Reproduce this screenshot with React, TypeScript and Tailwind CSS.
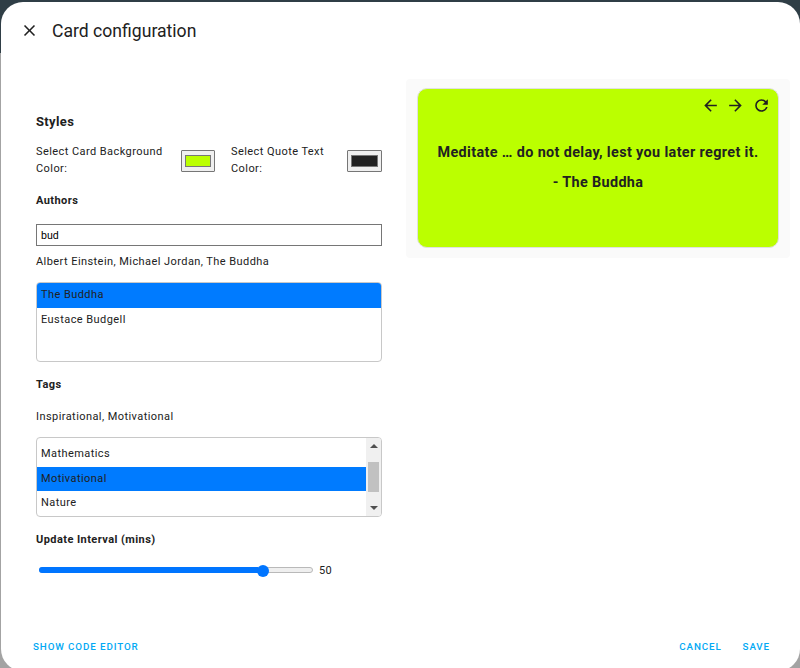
import React from "react";

const mdi = {
  close: "M19,6.41L17.59,5L12,10.59L6.41,5L5,6.41L10.59,12L5,17.59L6.41,19L12,13.41L17.59,19L19,17.59L13.41,12L19,6.41Z",
  left: "M20,11V13H8L13.5,18.5L12.08,19.92L4.16,12L12.08,4.08L13.5,5.5L8,11H20Z",
  right: "M4,11V13H16L10.5,18.5L11.92,19.92L19.84,12L11.92,4.08L10.5,5.5L16,11H4Z",
  refresh:
    "M17.65,6.35C16.2,4.9 14.21,4 12,4A8,8 0 0,0 4,12A8,8 0 0,0 12,20C15.73,20 18.84,17.45 19.73,14H17.65C16.83,16.33 14.61,18 12,18A6,6 0 0,1 6,12A6,6 0 0,1 12,6C13.66,6 15.14,6.69 16.22,7.78L13,11H20V4L17.65,6.35Z",
};

function Icon({ path, className }: { path: string; className: string }) {
  return (
    <svg viewBox="0 0 24 24" fill="currentColor" className={className}>
      <path d={path} />
    </svg>
  );
}

function ColorWell({ className, swatch }: { className: string; swatch: string }) {
  return (
    <button className={`mt-[7px] h-[22px] shrink-0 rounded-[1px] border border-[#767676] bg-[#efefef] px-[3px] py-1 ${className}`}>
      <span className={`block h-full w-full border border-[#777] ${swatch}`} />
    </button>
  );
}

function Header() {
  return (
    <header className="flex h-[58px] items-center pl-[19px]">
      <Icon path={mdi.close} className="mb-[2px] h-[19px] w-[19px]" />
      <h1 className="ml-[13px] text-[17.6px] font-normal tracking-normal">Card configuration</h1>
    </header>
  );
}

function Editor() {
  return (
    <section className="ml-[35px] mt-[53px] w-[346px] text-[11px] leading-[17px]">
      <h2 className="text-[13px] font-bold tracking-[0.35px]">Styles</h2>
      <div className="mt-[13px] flex h-[34px]">
        <label className="w-[145px]">Select Card Background Color:</label>
        <ColorWell className="w-[34px]" swatch="bg-[#bbff00]" />
        <label className="ml-4 w-[116px] pr-4">Select Quote Text Color:</label>
        <ColorWell className="w-[35px]" swatch="bg-[#212121]" />
      </div>
      <h3 className="mt-[15px] font-bold">Authors</h3>
      <input
        defaultValue="bud"
        className="mt-[15px] block h-[22px] w-full border border-[#767676] bg-white px-1 text-[10.6px] tracking-normal text-black outline-none"
      />
      <p className="mt-[7px]">Albert Einstein, Michael Jordan, The Buddha</p>
      <div className="mt-3 h-20 overflow-hidden rounded-[4px] border border-[#c8c8c8]">
        <div className="h-[25px] bg-[#007bff] px-1 leading-[23px]">The Buddha</div>
        <div className="h-[25px] px-1 leading-[23px]">Eustace Budgell</div>
      </div>
      <h3 className="mt-[14px] font-bold">Tags</h3>
      <p className="mt-[15px]">Inspirational, Motivational</p>
      <div className="mt-3 flex h-20 overflow-hidden rounded-[4px] border border-[#c8c8c8]">
        <div className="flex-1">
          <div className="h-[29px] px-1 leading-[31px]">Mathematics</div>
          <div className="h-6 bg-[#007bff] px-1 leading-[23px]">Motivational</div>
          <div className="h-6 px-1 leading-[23px]">Nature</div>
        </div>
        <div className="flex w-[15px] flex-col items-center bg-[#f0f0f0] text-[#505050]">
          <svg viewBox="0 0 8 4" className="mt-[6px] h-1 w-2" fill="currentColor">
            <path d="M0 4L4 0L8 4Z" />
          </svg>
          <div className="mt-[14px] h-[30px] w-[11px] bg-[#c1c1c1]" />
          <svg viewBox="0 0 8 4" className="mt-[14px] h-1 w-2" fill="currentColor">
            <path d="M0 0L4 4L8 0Z" />
          </svg>
        </div>
      </div>
      <h3 className="mt-[14px] font-bold">Update Interval (mins)</h3>
      <div className="mt-[14px] flex items-center">
        <div className="mb-px ml-[3px] flex h-[6px] w-[274px] items-center rounded-full border border-[#b9b9b9] bg-[#efefef]">
          <div className="-ml-px h-[6px] w-[218.5px] rounded-l-full bg-[#0075ff]" />
          <div className="-ml-px mt-px h-3 w-3 rounded-full bg-[#0075ff]" />
        </div>
        <span className="ml-[6px]">50</span>
      </div>
    </section>
  );
}

function Preview() {
  return (
    <section className="ml-6 mt-[19px] h-[179px] w-[384px] rounded-[4px] bg-[#fafafa] pl-[11px] pt-[9px]">
      <div className="h-[160px] w-[362px] rounded-[10px] border border-[#e0e0e0] bg-[#bbff00]">
        <div className="flex h-[32px] items-center justify-end pr-[7px]">
          <Icon path={mdi.left} className="h-[19px] w-[19px]" />
          <Icon path={mdi.right} className="ml-[6px] h-[19px] w-[19px]" />
          <Icon path={mdi.refresh} className="ml-[7px] h-[19px] w-[19px]" />
        </div>
        <div className="mt-[17px] text-center text-[14.4px] font-bold leading-[30px] tracking-[0.36px]">
          <p className="whitespace-nowrap">Meditate … do not delay, lest you later regret it.</p>
          <p>- The Buddha</p>
        </div>
      </div>
    </section>
  );
}

export default function App() {
  return (
    <div className="h-[668px] w-[800px] overflow-hidden bg-[linear-gradient(#2f3e46_53px,#a3a3a3_53px)] pl-px pt-[2px] font-[Roboto,sans-serif] text-[#212121]">
      <main className="flex h-[669px] w-[799px] flex-col rounded-[22px] bg-white tracking-[0.43px]">
        <Header />
        <div className="flex h-[578px] items-start">
          <Editor />
          <Preview />
        </div>
        <footer className="flex items-center pl-8 pr-[30px] text-[9.8px] font-medium leading-[18px] tracking-[0.88px] text-[#03a9f4]">
          <button>SHOW CODE EDITOR</button>
          <button className="ml-auto">CANCEL</button>
          <button className="ml-[21px]">SAVE</button>
        </footer>
      </main>
    </div>
  );
}
